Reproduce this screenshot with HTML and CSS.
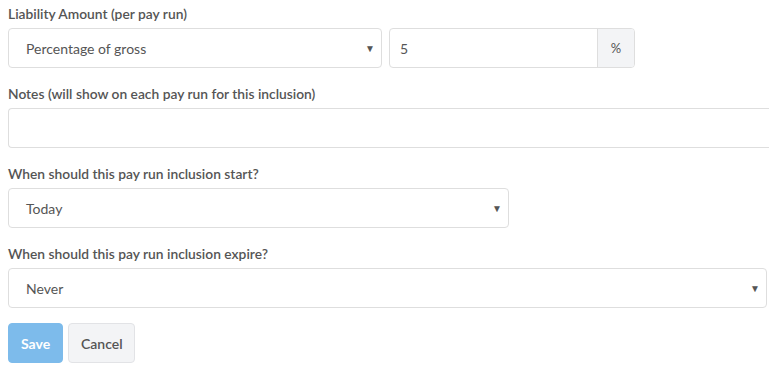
FILE: index.html
```html
<!DOCTYPE html>
<html lang="en">
<head>
    <meta charset="UTF-8">
    <meta name="viewport" content="width=device-width, initial-scale=1.0">
    <title>Pay Run Inclusion</title>
    <link rel="stylesheet" href="styles.css">
</head>
<body>
    <form class="inclusion-form">
        <div class="field">
            <label class="field-label">Liability Amount (per pay run)</label>
            <div class="amount-row">
                <div class="select select-type">
                    <span>Percentage of gross</span>
                    <span class="caret">&#9660;</span>
                </div>
                <div class="input-group">
                    <div class="input-value">5</div>
                    <div class="addon">%</div>
                </div>
            </div>
        </div>

        <div class="field">
            <label class="field-label">Notes (will show on each pay run for this inclusion)</label>
            <div class="textbox notes"></div>
        </div>

        <div class="field">
            <label class="field-label">When should this pay run inclusion start?</label>
            <div class="select select-start">
                <span>Today</span>
                <span class="caret">&#9660;</span>
            </div>
        </div>

        <div class="field field-last">
            <label class="field-label">When should this pay run inclusion expire?</label>
            <div class="select select-expire">
                <span>Never</span>
                <span class="caret">&#9660;</span>
            </div>
        </div>

        <div class="actions">
            <button type="button" class="btn btn-save">Save</button>
            <button type="button" class="btn btn-cancel">Cancel</button>
        </div>
    </form>
</body>
</html>
```

FILE: styles.css
```css
body {
    margin: 0;
    padding: 6px 0 0 8px;
    background: #fff;
    font-family: 'Lato', 'Open Sans', sans-serif;
    color: #555;
    overflow: hidden;
}

.inclusion-form {
    width: 761px;
}

.field {
    margin-bottom: 18px;
}

.field-last {
    margin-bottom: 15px;
}

.field-label {
    display: block;
    font-size: 13.8px;
    font-weight: 600;
    color: #555;
    line-height: 16px;
    margin-bottom: 6px;
}

.amount-row {
    display: flex;
    gap: 7px;
}

.select,
.textbox,
.input-group {
    box-sizing: border-box;
    height: 40px;
    border: 1px solid #dedede;
    border-radius: 4px;
    background: #fff;
}

.select {
    display: flex;
    align-items: center;
    justify-content: space-between;
    padding: 0 6px 0 17px;
    font-size: 14px;
    color: #555;
}

.caret {
    font-size: 10px;
    color: #555;
}

.select-type {
    width: 374px;
}

.input-group {
    width: 246px;
    display: flex;
    overflow: hidden;
}

.input-value {
    flex: 1;
    display: flex;
    align-items: center;
    padding-left: 10px;
    font-size: 14px;
}

.addon {
    width: 36px;
    display: flex;
    align-items: center;
    justify-content: center;
    background: #f3f4f6;
    border-left: 1px solid #dedede;
    font-size: 13px;
}

.notes {
    width: 761px;
    border-right: none;
    border-radius: 4px 0 0 4px;
}

.select-start {
    width: 501px;
}

.select-expire {
    width: 759px;
}

.actions {
    display: flex;
    gap: 5px;
}

.btn {
    height: 40px;
    border-radius: 4px;
    font-family: inherit;
    font-size: 14px;
    font-weight: 700;
    padding: 0 12px;
    cursor: pointer;
}

.btn-save {
    width: 55px;
    background: #7dbbeb;
    border: 1px solid #7dbbeb;
    color: #fff;
}

.btn-cancel {
    width: 67px;
    background: #f3f4f6;
    border: 1px solid #e2e3e6;
    color: #555;
    font-weight: 600;
}
```
